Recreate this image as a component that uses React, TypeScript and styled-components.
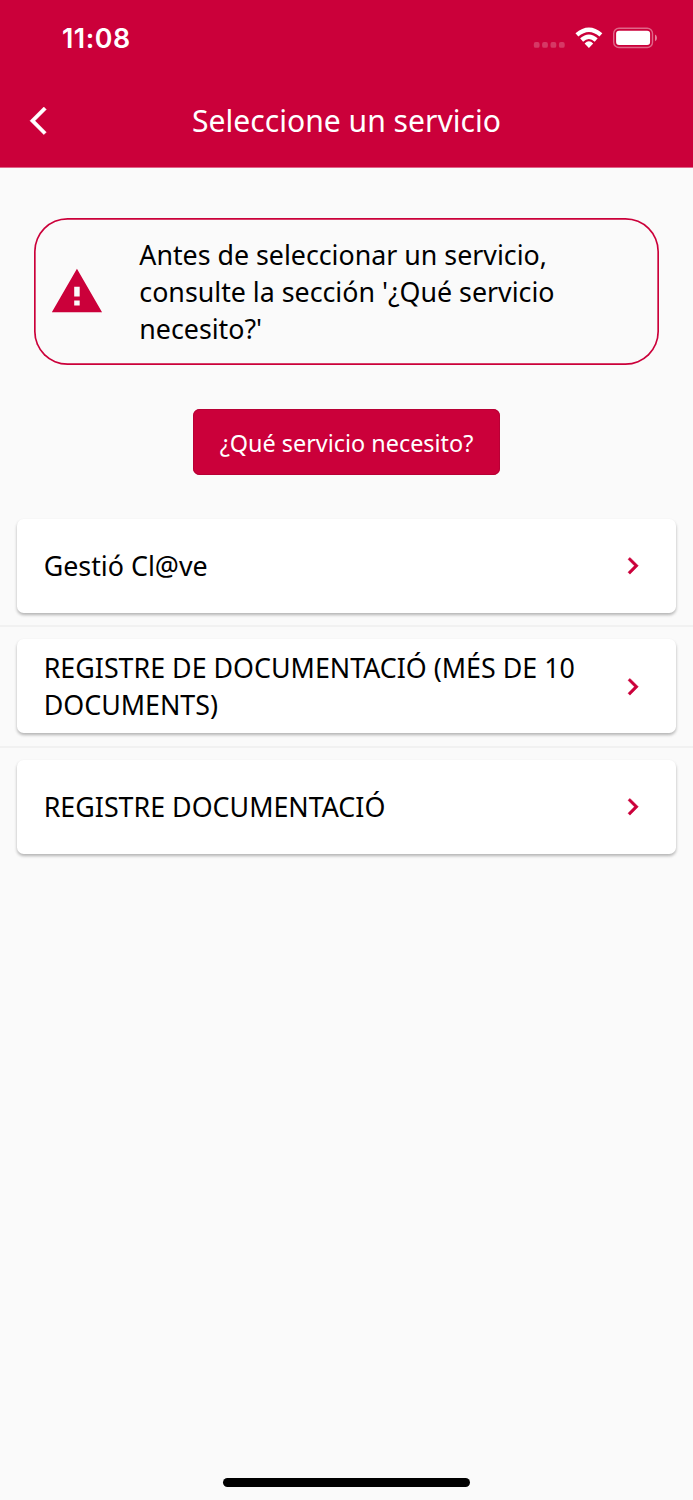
import React from "react";
import styled, { createGlobalStyle } from "styled-components";

const RED = "#cb003a";

const GlobalStyle = createGlobalStyle`
  * { box-sizing: border-box; }
  body { margin: 0; background: #fafafa; }
`;

const Screen = styled.div`
  width: 693px;
  height: 1500px;
  display: flex;
  flex-direction: column;
  background: #fafafa;
  color: #000;
  font-family: "Noto Sans", sans-serif;
  overflow: hidden;
`;

const Header = styled.header`
  flex: none;
  height: 168px;
  background: ${RED};
  border-bottom: 1px solid #e0658a;
  color: #fff;
`;

const StatusBar = styled.div`
  height: 73.7px;
  padding: 2px 36px 0 62px;
  display: flex;
  align-items: center;
  justify-content: space-between;
`;

const Clock = styled.span`
  padding-top: 1px;
  font: 560 26.8px/32px Inter, sans-serif;
  letter-spacing: 0.5px;
`;

const StatusIcons = styled.svg`
  display: block;
  width: 124px;
  height: 24px;
`;

const Toolbar = styled.div`
  height: 93.7px;
  padding-left: 30.3px;
  display: grid;
  grid-template-columns: 32px 1fr 62.3px;
  align-items: center;
`;

const BackIcon = styled.svg`
  display: block;
  width: 16.3px;
  height: 27.6px;
  overflow: visible;
`;

const Title = styled.h1`
  margin: 0;
  text-align: center;
  font-size: 30.1px;
  font-weight: 400;
  line-height: 41px;
`;

const Notice = styled.section`
  flex: none;
  margin: 50px 34px 0 33.5px;
  height: 147px;
  display: flex;
  align-items: center;
  padding-left: 16px;
  border-radius: 33.5px;
  box-shadow: inset 0 0 0 1.67px ${RED};
`;

const WarningIcon = styled.svg`
  flex: none;
  width: 54.8px;
  height: 54.8px;
  margin-right: 35px;
`;

const NoticeText = styled.p`
  margin: 0;
  padding-top: 2px;
  width: 440px;
  font-size: 26.78px;
  line-height: 36.8px;
`;

const HelpButton = styled.button`
  flex: none;
  align-self: center;
  margin: 44.2px 0 44.2px;
  width: 307.6px;
  height: 65.6px;
  padding: 2px 0 0;
  border: 0;
  border-radius: 6.7px;
  background: ${RED};
  box-shadow: inset 0 0 0 1px #b80035;
  color: #fff;
  font-family: inherit;
  font-size: 23.4px;
  line-height: 32px;
`;

const List = styled.ul`
  flex: 1;
  margin: 0;
  padding: 0;
  list-style: none;
`;

const Item = styled.li`
  height: 120.4px;
  padding: 0 16.7px;
  display: flex;
  flex-direction: column;
`;

const Card = styled.div`
  height: 93.8px;
  padding: 0 27px;
  display: flex;
  align-items: center;
  justify-content: space-between;
  border-radius: 6.7px;
  background: #fff;
  box-shadow: 0 2px 3px rgba(0, 0, 0, 0.24), 0 2px 4px rgba(0, 0, 0, 0.06);
`;

const Divider = styled.hr`
  width: 693px;
  height: 2px;
  margin: 12.5px -16.7px 0;
  border: 0;
  background: #f1f1f1;
`;

const Label = styled.span`
  padding-top: 1.4px;
  width: 545px;
  font-size: 26.82px;
  line-height: 36.8px;
`;

const Chevron = styled.svg`
  flex: none;
  width: 33.5px;
  height: 33.5px;
`;

const HomeIndicator = styled.div`
  flex: none;
  align-self: center;
  width: 247.6px;
  height: 8.6px;
  margin-bottom: 13.5px;
  border-radius: 5px;
  background: #000;
`;

const services = [
  "Gestió Cl@ve",
  "REGISTRE DE DOCUMENTACIÓ (MÉS DE 10 DOCUMENTS)",
  "REGISTRE DOCUMENTACIÓ",
];

export default function App() {
  return (
    <>
      <GlobalStyle />
      <Screen>
        <Header>
          <StatusBar>
            <Clock>11:08</Clock>
            <StatusIcons viewBox="533 26 124 24" fill="#fff">
              <g fillOpacity="0.22">
                {[533.8, 542.1, 550.5, 558.9].map((x) => (
                  <rect key={x} x={x} y="42" width="5.8" height="5.8" rx="1.9" />
                ))}
              </g>
              <path d="M588.9 48L584.6 43.5Q588.9 39.2 593.2 43.5Z" />
              <g fill="none" stroke="#fff" strokeWidth="4.4">
                <path d="M581.6 40Q588.9 33.4 596.2 40" />
                <path d="M576.9 34.9Q588.9 24.6 600.9 34.9" />
              </g>
              <rect x="613.7" y="28.3" width="38.8" height="19.2" rx="5.3" fill="none" stroke="#fff" strokeOpacity="0.4" strokeWidth="1.4" />
              <rect x="616.1" y="30.8" width="34" height="14.2" rx="3" />
              <path d="M655 34.6v6.6q2-1 2-3.3t-2-3.3z" fillOpacity="0.5" />
            </StatusIcons>
          </StatusBar>
          <Toolbar>
            <BackIcon viewBox="0 2.1 11.67 19.8" fill="#fff" stroke="#fff" strokeWidth="0.35">
              <path d="M11.67 3.87L9.9 2.1 0 12l9.9 9.9 1.77-1.77L3.54 12z" />
            </BackIcon>
            <Title>Seleccione un servicio</Title>
          </Toolbar>
        </Header>
        <Notice>
          <WarningIcon viewBox="0.2 -0.1 24 24" fill={RED}>
            <path d="M1 21h22L12 2 1 21zm12.2-2.9h-2.4v-2.2h2.4v2.2zm0-4h-2.4v-4.2h2.4v4.2z" />
          </WarningIcon>
          <NoticeText>
            Antes de seleccionar un servicio, consulte la sección '¿Qué servicio necesito?'
          </NoticeText>
        </Notice>
        <HelpButton>¿Qué servicio necesito?</HelpButton>
        <List>
          {services.map((name, i) => (
            <Item key={name}>
              <Card>
                <Label>{name}</Label>
                <Chevron viewBox="0 0 24 24" fill={RED} stroke={RED} strokeWidth="0.3">
                  <path d="M10 6L8.59 7.41 13.17 12l-4.58 4.59L10 18l6-6z" />
                </Chevron>
              </Card>
              {i < services.length - 1 && <Divider />}
            </Item>
          ))}
        </List>
        <HomeIndicator />
      </Screen>
    </>
  );
}
